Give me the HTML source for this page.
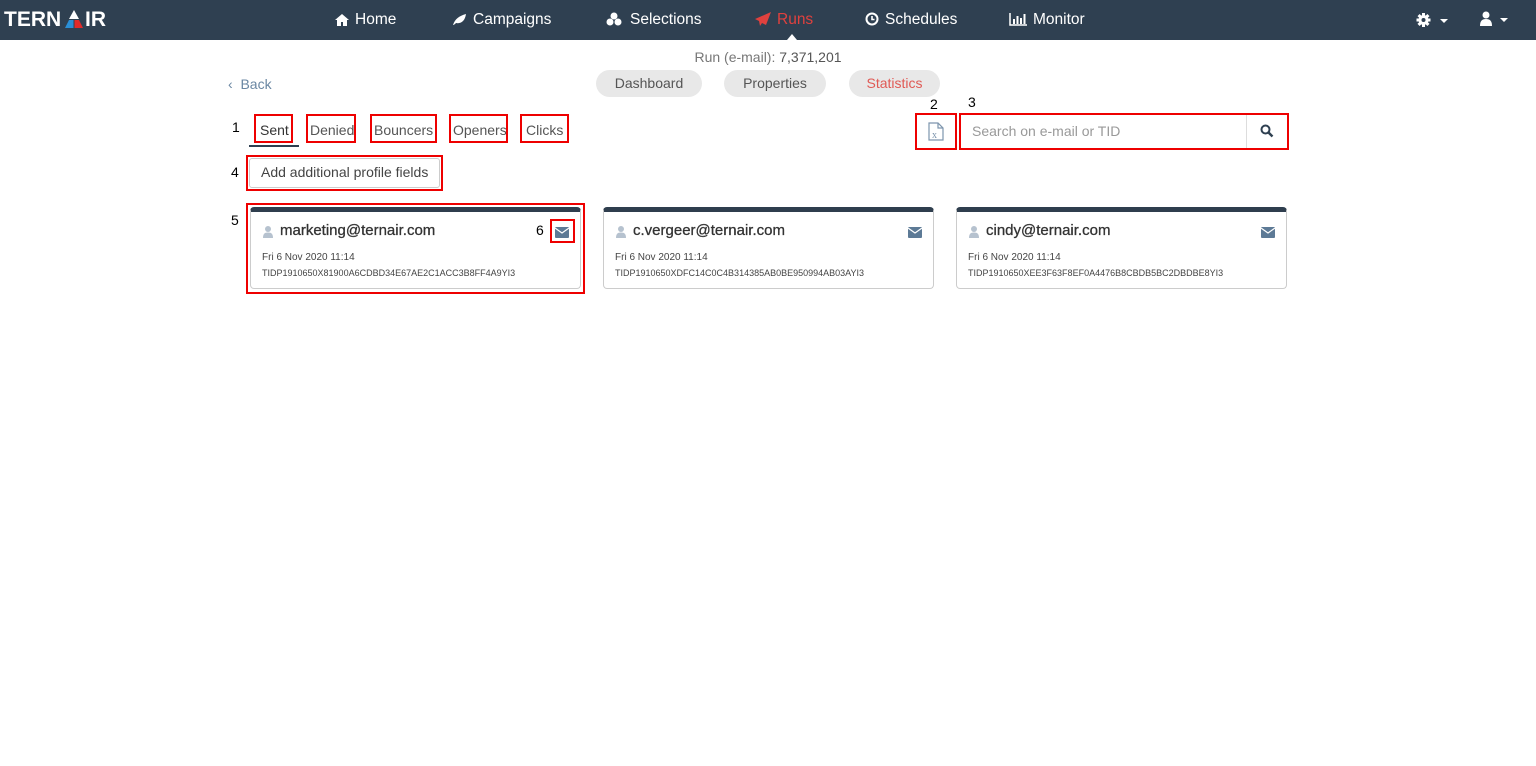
<!DOCTYPE html>
<html><head><meta charset="utf-8"><style>
*{box-sizing:border-box;margin:0;padding:0}
body{width:1536px;height:766px;background:#fff;font-family:"Liberation Sans",sans-serif;position:relative;overflow:hidden;color:#333}
.a{position:absolute}
.nav{left:0;top:0;width:1536px;height:40px;background:#2f4051}
.ni{color:#fff;font-size:15.5px;top:11px;white-space:nowrap}
.ni svg{vertical-align:-2px;margin-right:6px}
.rb{border:2px solid #e00;position:absolute}
.num{font-size:14px;color:#000}
.pill{top:70px;height:27px;border-radius:14px;background:#e8e8e8;color:#555;font-size:14px;text-align:center;line-height:27px}
.tab{font-size:14px;color:#555;top:122px}
.card{top:207px;width:331px;height:82px;border:1px solid #ccc;border-top:5px solid #2f3e4e;border-radius:4px}
.card .em{position:absolute;left:29px;top:10px;font-size:15px;color:#333;-webkit-text-stroke:0.3px #333}
.card .dt{position:absolute;left:11px;top:40px;font-size:10px;color:#444}
.card .td{position:absolute;left:11px;top:56px;font-size:9px;color:#444}
.card .us{position:absolute;left:12px;top:14px}
.card .ml{position:absolute;right:11px;top:15px}
</style></head><body>
<div class="a nav"></div>
<div class="a" style="left:4px;top:8px;color:#fff;font-weight:bold;font-size:21px">TERN</div>
<svg class="a" style="left:65px;top:10px" width="18" height="19" viewBox="0 0 18 19"><polygon points="9,0 14,9 4,9" fill="#fff"/><polygon points="4,10 8.5,10 8.5,18 0,18" fill="#2a8fd6"/><polygon points="9.5,10 14,10 18,18 9.5,18" fill="#e02a2a"/></svg>
<div class="a" style="left:85px;top:8px;color:#fff;font-weight:bold;font-size:21px">IR</div>
<div class="a ni" style="left:335px"><svg width="14" height="13" viewBox="0 0 14 13"><path d="M7 1L0 7h2v6h4V9h2v4h4V7h2z" fill="#fff"/></svg>Home</div>
<div class="a ni" style="left:452px"><svg width="15" height="13" viewBox="0 0 15 13"><path d="M1 12C3 6 7 3 14 1 13 8 9 11 4 10 3 11 2 12 1 12z" fill="#fff"/></svg>Campaigns</div>
<div class="a ni" style="left:605px"><svg width="19" height="14" viewBox="0 0 19 14"><circle cx="9" cy="4" r="3.5" fill="#fff"/><circle cx="5" cy="10" r="3.5" fill="#fff"/><circle cx="13" cy="10" r="3.5" fill="#fff"/></svg>Selections</div>
<div class="a ni" style="left:755px;color:#e0413e"><svg width="16" height="14" viewBox="0 0 16 14"><path d="M16 0L0 7l4 2 1 5 2-3 4 2z" fill="#e0413e"/></svg>Runs</div>
<div class="a" style="left:787px;top:34px;width:0;height:0;border-left:5px solid transparent;border-right:5px solid transparent;border-bottom:6px solid #fff"></div>
<div class="a ni" style="left:865px"><svg width="14" height="14" viewBox="0 0 14 14"><circle cx="7" cy="7" r="5.5" fill="none" stroke="#fff" stroke-width="2"/><path d="M7 4v3.5h2.5" stroke="#fff" stroke-width="1.6" fill="none"/></svg>Schedules</div>
<div class="a ni" style="left:1009px"><svg width="18" height="13" viewBox="0 0 18 13"><path d="M1 0v12h17" stroke="#fff" stroke-width="1.5" fill="none"/><rect x="4" y="6" width="2" height="5" fill="#fff"/><rect x="7.5" y="3" width="2" height="8" fill="#fff"/><rect x="11" y="5" width="2" height="6" fill="#fff"/><rect x="14.5" y="1" width="2" height="10" fill="#fff"/></svg>Monitor</div>
<svg class="a" style="left:1416px;top:12px" width="34" height="16" viewBox="0 0 34 16"><g fill="#fff"><rect x="6" y="1" width="3" height="14"/><rect x="0.5" y="6.5" width="14" height="3"/><rect x="6" y="1" width="3" height="14" transform="rotate(45 7.5 8)"/><rect x="6" y="1" width="3" height="14" transform="rotate(-45 7.5 8)"/><circle cx="7.5" cy="8" r="5"/></g><circle cx="7.5" cy="8" r="2" fill="#2f4051"/><path d="M24 7h8l-4 4z" fill="#fff"/></svg>
<svg class="a" style="left:1480px;top:11px" width="30" height="16" viewBox="0 0 30 16"><circle cx="6" cy="4" r="3.5" fill="#fff"/><path d="M0 15c0-5 2-7 6-7s6 2 6 7z" fill="#fff"/><path d="M20 7h8l-4 4z" fill="#fff"/></svg>

<div class="a" style="left:0;width:1536px;text-align:center;top:49px;font-size:14px;color:#777">Run (e-mail): <span style="color:#555">7,371,201</span></div>
<div class="a" style="left:228px;top:76px;font-size:14px;color:#6a87a3">‹ &nbsp;Back</div>
<div class="a pill" style="left:596px;width:106px">Dashboard</div>
<div class="a pill" style="left:724px;width:102px">Properties</div>
<div class="a pill" style="left:849px;width:91px;color:#e05a55">Statistics</div>

<div class="a num" style="left:232px;top:119px">1</div>
<div class="a tab" style="left:260px;color:#333">Sent</div>
<div class="a" style="left:249px;top:145px;width:50px;height:2px;background:#2f4051"></div>
<div class="rb" style="left:254px;top:114px;width:39px;height:29px"></div>
<div class="a tab" style="left:310px">Denied</div>
<div class="rb" style="left:306px;top:114px;width:50px;height:29px"></div>
<div class="a tab" style="left:374px">Bouncers</div>
<div class="rb" style="left:370px;top:114px;width:67px;height:29px"></div>
<div class="a tab" style="left:453px">Openers</div>
<div class="rb" style="left:449px;top:114px;width:59px;height:29px"></div>
<div class="a tab" style="left:526px">Clicks</div>
<div class="rb" style="left:520px;top:114px;width:49px;height:29px"></div>

<div class="a num" style="left:930px;top:96px">2</div>
<div class="a num" style="left:968px;top:94px">3</div>
<div class="rb" style="left:915px;top:113px;width:42px;height:37px"></div>
<svg class="a" style="left:928px;top:122px" width="16" height="19" viewBox="0 0 16 19"><path d="M1 1h9l5 5v12H1z" fill="none" stroke="#7d95ad" stroke-width="1.2"/><path d="M10 1v5h5" fill="none" stroke="#7d95ad" stroke-width="1.2"/><text x="4" y="16" font-size="10" fill="#7d95ad" font-family="Liberation Serif">x</text></svg>
<div class="rb" style="left:959px;top:113px;width:330px;height:37px"></div>
<div class="a" style="left:1246px;top:115px;width:1px;height:33px;background:#ddd"></div>
<div class="a" style="left:972px;top:123px;font-size:14px;color:#999">Search on e-mail or TID</div>
<svg class="a" style="left:1260px;top:124px" width="14" height="14" viewBox="0 0 14 14"><circle cx="5.5" cy="5.5" r="4" fill="none" stroke="#2f4051" stroke-width="2"/><path d="M8.5 8.5L12.5 12.5" stroke="#2f4051" stroke-width="2.4"/></svg>

<div class="a num" style="left:231px;top:164px">4</div>
<div class="a" style="left:249px;top:158px;width:191px;height:30px;border:1px solid #ccc;border-radius:3px"></div>
<div class="rb" style="left:246px;top:155px;width:197px;height:36px"></div>
<div class="a" style="left:261px;top:164px;font-size:14px;color:#444">Add additional profile fields</div>

<div class="a num" style="left:231px;top:212px">5</div>
<div class="rb" style="left:246px;top:203px;width:339px;height:91px"></div>
<div class="a num" style="left:536px;top:222px">6</div>
<div class="rb" style="left:550px;top:219px;width:25px;height:24px"></div>

<div class="a card" style="left:250px"><svg class="us" width="10" height="12" viewBox="0 0 10 12"><circle cx="5" cy="3" r="3" fill="#b6c2cf"/><path d="M0 12c0-4 1.5-5.5 5-5.5s5 1.5 5 5.5z" fill="#b6c2cf"/></svg><div class="em">marketing@ternair.com</div><svg class="ml" width="14" height="11" viewBox="0 0 14 11"><rect width="14" height="11" rx="1" fill="#5d7a96"/><path d="M0 1l7 5 7-5" stroke="#fff" stroke-width="1.2" fill="none"/></svg><div class="dt">Fri 6 Nov 2020 11:14</div><div class="td">TIDP1910650X81900A6CDBD34E67AE2C1ACC3B8FF4A9YI3</div></div>
<div class="a card" style="left:603px"><svg class="us" width="10" height="12" viewBox="0 0 10 12"><circle cx="5" cy="3" r="3" fill="#b6c2cf"/><path d="M0 12c0-4 1.5-5.5 5-5.5s5 1.5 5 5.5z" fill="#b6c2cf"/></svg><div class="em">c.vergeer@ternair.com</div><svg class="ml" width="14" height="11" viewBox="0 0 14 11"><rect width="14" height="11" rx="1" fill="#5d7a96"/><path d="M0 1l7 5 7-5" stroke="#fff" stroke-width="1.2" fill="none"/></svg><div class="dt">Fri 6 Nov 2020 11:14</div><div class="td">TIDP1910650XDFC14C0C4B314385AB0BE950994AB03AYI3</div></div>
<div class="a card" style="left:956px"><svg class="us" width="10" height="12" viewBox="0 0 10 12"><circle cx="5" cy="3" r="3" fill="#b6c2cf"/><path d="M0 12c0-4 1.5-5.5 5-5.5s5 1.5 5 5.5z" fill="#b6c2cf"/></svg><div class="em">cindy@ternair.com</div><svg class="ml" width="14" height="11" viewBox="0 0 14 11"><rect width="14" height="11" rx="1" fill="#5d7a96"/><path d="M0 1l7 5 7-5" stroke="#fff" stroke-width="1.2" fill="none"/></svg><div class="dt">Fri 6 Nov 2020 11:14</div><div class="td">TIDP1910650XEE3F63F8EF0A4476B8CBDB5BC2DBDBE8YI3</div></div>
</body></html>
